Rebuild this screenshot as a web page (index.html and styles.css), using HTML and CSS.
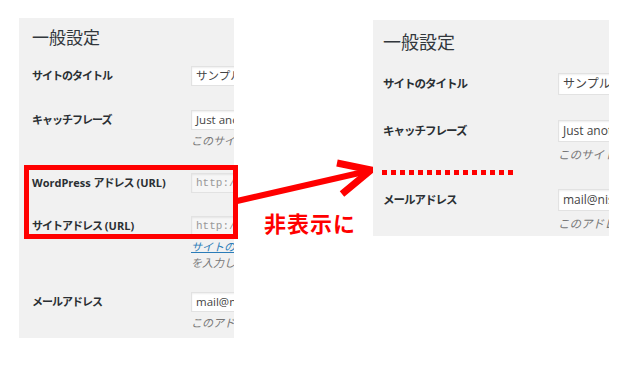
FILE: index.html
```html
<!DOCTYPE html>
<html lang="ja">
<head>
	<meta charset="UTF-8">
	<title>一般設定</title>
	<link rel="stylesheet" href="styles.css">
</head>
<body>
	<div class="stage">
		<!-- before -->
		<div class="panel before">
			<h1>一般設定</h1>
			<div class="row r1">
				<div class="label">サイトのタイトル</div>
				<div class="field"><span class="input">サンプルサイト</span></div>
			</div>
			<div class="row r2">
				<div class="label">キャッチフレーズ</div>
				<div class="field">
					<span class="input">Just another WordPress site</span>
					<p class="desc">このサイトの簡単な説明。</p>
				</div>
			</div>
			<div class="row r3">
				<div class="label"><span class="lat">WordPress </span>アドレス<span class="lat"> (URL)</span></div>
				<div class="field"><span class="input off">http://example.com</span></div>
			</div>
			<div class="row r4">
				<div class="label">サイトアドレス<span class="lat"> (URL)</span></div>
				<div class="field">
					<span class="input off">http://example.com</span>
					<p class="desc"><a href="#">サイトのホームページ</a><br>を入力してください。</p>
				</div>
			</div>
			<div class="row r5">
				<div class="label">メールアドレス</div>
				<div class="field">
					<span class="input">mail@nishi.jp</span>
					<p class="desc">このアドレスは管理のために使われます。</p>
				</div>
			</div>
		</div>

		<div class="hilite"></div>

		<svg class="arrow" width="640" height="365" viewBox="0 0 640 365">
			<line x1="237" y1="201" x2="368" y2="171" stroke="#f00" stroke-width="6"/>
			<polyline points="337,163 371,170 342,194" fill="none" stroke="#f00" stroke-width="7"/>
		</svg>
		<div class="note">非表示に</div>

		<!-- after -->
		<div class="panel after">
			<h1>一般設定</h1>
			<div class="row r1">
				<div class="label">サイトのタイトル</div>
				<div class="field"><span class="input">サンプルサイト</span></div>
			</div>
			<div class="row r2">
				<div class="label">キャッチフレーズ</div>
				<div class="field">
					<span class="input">Just another WordPress site</span>
					<p class="desc">このサイトの簡単な説明。</p>
				</div>
			</div>
			<div class="dots"></div>
			<div class="row r3">
				<div class="label">メールアドレス</div>
				<div class="field">
					<span class="input">mail@nishi.jp</span>
					<p class="desc">このアドレスは管理のために使われます。</p>
				</div>
			</div>
		</div>
	</div>
</body>
</html>
```

FILE: styles.css
```css
body {
	margin: 0;
	background: #fff;
	font-family: "Open Sans", "Noto Sans CJK JP", sans-serif;
	color: #23282d;
}

.stage {
	position: relative;
	width: 640px;
	height: 365px;
	overflow: hidden;
}

.panel {
	position: absolute;
	background: #f1f1f1;
	overflow: hidden;
	box-sizing: border-box;
}

.panel h1 {
	margin: 0;
	font-weight: 400;
	white-space: nowrap;
	color: #32373c;
}

.row {
	display: grid;
	align-items: start;
}

.label {
	font-weight: 700;
	white-space: nowrap;
	letter-spacing: -1px;
	color: #2a2f33;
}

.label .lat {
	letter-spacing: 0;
	white-space: pre;
}

.field {
	min-width: 0;
}

.input {
	display: block;
	box-sizing: border-box;
	width: 200px;
	background: #fff;
	border: 1px solid #e2e2e2;
	box-shadow: inset 0 1px 2px rgba(0, 0, 0, 0.07);
	color: #444;
	white-space: nowrap;
	padding-left: 4px;
}

.input.off {
	background: #f6f6f6;
	color: #9a9a9a;
	font-family: "Liberation Mono", "DejaVu Sans Mono", monospace;
}

.desc {
	margin: 0;
	color: #777;
	font-style: italic;
	white-space: nowrap;
}

.desc a {
	color: #2a7cb8;
}

/* left panel */
.before {
	left: 19px;
	top: 18px;
	width: 215px;
	height: 320px;
	padding-left: 13px;
}

.before h1 {
	margin-top: 10px;
	font-size: 17px;
	line-height: 20px;
}

.before .row {
	grid-template-columns: 159px 1fr;
}

.before .label {
	font-size: 11px;
	line-height: 20px;
}

.before .input {
	height: 20px;
	font-size: 11.5px;
	line-height: 18px;
}

.before .input.off {
	font-size: 11px;
}

.before .desc {
	margin-top: 3px;
	font-size: 11px;
	line-height: 16px;
}

.before .desc a {
	display: inline-block;
	margin-top: -1px;
}

.before .r1 { margin-top: 18px; }
.before .r2 { margin-top: 24px; }
.before .r3 { margin-top: 24px; }
.before .r4 { margin-top: 23px; }
.before .r5 { margin-top: 21px; }

/* right panel */
.after {
	left: 373px;
	top: 20px;
	width: 236px;
	height: 216px;
	padding-left: 10px;
}

.after h1 {
	margin-top: 11px;
	font-size: 18px;
	line-height: 22px;
}

.after .row {
	grid-template-columns: 175px 1fr;
}

.after .label {
	font-size: 11.5px;
	line-height: 22px;
}

.after .input {
	height: 22px;
	font-size: 12px;
	line-height: 20px;
}

.after .desc {
	margin-top: 4px;
	font-size: 11.5px;
	line-height: 17px;
}

.after .r1 { margin-top: 20px; }
.after .r2 { margin-top: 25px; }
.after .r3 { margin-top: 14px; }

.dots {
	margin-top: 7px;
	margin-left: -1px;
	width: 135px;
	height: 5px;
	background: repeating-linear-gradient(90deg, #f00 0 5px, transparent 5px 9px);
}

/* overlays */
.hilite {
	position: absolute;
	left: 24px;
	top: 165px;
	width: 214px;
	height: 74px;
	border: 5px solid #f00;
	box-sizing: border-box;
}

.arrow {
	position: absolute;
	left: 0;
	top: 0;
}

.note {
	position: absolute;
	left: 264px;
	top: 208px;
	font-family: "Noto Sans CJK JP", sans-serif;
	font-size: 22px;
	line-height: 28px;
	font-weight: 700;
	color: #f00;
	letter-spacing: 1px;
}
```
